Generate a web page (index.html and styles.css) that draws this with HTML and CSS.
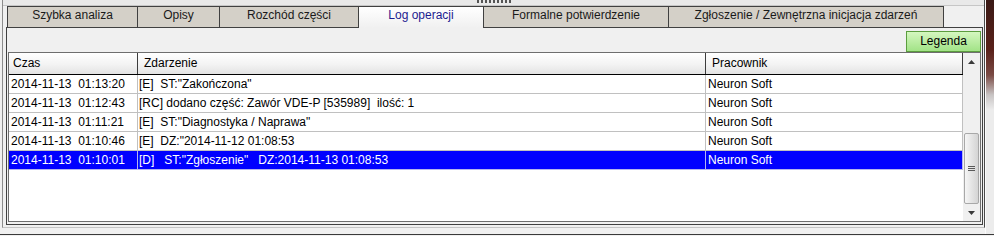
FILE: index.html
```html
<!DOCTYPE html>
<html lang="pl">
<head>
<meta charset="utf-8">
<title>Log operacji</title>
<link rel="stylesheet" href="styles.css">
</head>
<body>
<div class="screen">
  <div class="frame">
    <div class="splitter"><span class="grip"></span></div>
    <div class="tabs">
      <div class="tab t1">Szybka analiza</div>
      <div class="tab t2">Opisy</div>
      <div class="tab t3">Rozchód części</div>
      <div class="tab t4 active">Log operacji</div>
      <div class="tab t5">Formalne potwierdzenie</div>
      <div class="tab t6 last">Zgłoszenie / Zewnętrzna inicjacja zdarzeń</div>
    </div>
    <div class="panel">
      <div class="toolbar"><button class="legend" type="button">Legenda</button></div>
      <div class="grid">
        <div class="grid-main">
          <div class="row head">
            <div class="cell c1">Czas</div>
            <div class="cell c2">Zdarzenie</div>
            <div class="cell c3">Pracownik</div>
          </div>
          <div class="row">
            <div class="cell c1">2014-11-13  01:13:20</div>
            <div class="cell c2">[E]  ST:"Zakończona"</div>
            <div class="cell c3">Neuron Soft</div>
          </div>
          <div class="row">
            <div class="cell c1">2014-11-13  01:12:43</div>
            <div class="cell c2">[RC] dodano część: Zawór VDE-P [535989]  ilość: 1</div>
            <div class="cell c3">Neuron Soft</div>
          </div>
          <div class="row">
            <div class="cell c1">2014-11-13  01:11:21</div>
            <div class="cell c2">[E]  ST:"Diagnostyka / Naprawa"</div>
            <div class="cell c3">Neuron Soft</div>
          </div>
          <div class="row">
            <div class="cell c1">2014-11-13  01:10:46</div>
            <div class="cell c2">[E]  DZ:"2014-11-12 01:08:53</div>
            <div class="cell c3">Neuron Soft</div>
          </div>
          <div class="row sel">
            <div class="cell c1">2014-11-13  01:10:01</div>
            <div class="cell c2">[D]   ST:"Zgłoszenie"   DZ:2014-11-13 01:08:53</div>
            <div class="cell c3">Neuron Soft</div>
          </div>
        </div>
        <div class="scrollbar">
          <div class="sb-btn"><svg width="7" height="4" viewBox="0 0 7 4"><polygon points="3.5,0 7,4 0,4" fill="#3a3a3a"/></svg></div>
          <div class="sb-track"><div class="thumb"><i></i><i></i><i></i></div></div>
          <div class="sb-btn"><svg width="7" height="4" viewBox="0 0 7 4"><polygon points="0,0 7,0 3.5,4" fill="#3a3a3a"/></svg></div>
        </div>
      </div>
    </div>
  </div>
  <div class="edge"></div>
</div>
</body>
</html>
```
FILE: styles.css
```css
* { box-sizing: border-box; margin: 0; padding: 0; }
html, body { width: 994px; height: 236px; overflow: hidden; }
body {
  background: #f0f0f0;
  font-family: "Liberation Sans", Arial, sans-serif;
  font-size: 12px;
  color: #000;
}
.screen {
  display: flex;
  height: 235px;
  border-bottom: 1px solid #3a3a3a;
}
.frame {
  margin-left: 2px;
  width: 983px;
  height: 228px;
  border-left: 1px solid #8c8c8c;
  border-right: 1px solid #4a4a4a;
  border-bottom: 1px solid #c4c4c4;
  display: flex;
  flex-direction: column;
}
.splitter {
  height: 6px;
  background: #e9e9e9;
  border-bottom: 1px solid #c6c6c6;
  display: flex;
  justify-content: center;
}
.grip {
  width: 34px;
  height: 3px;
  background: repeating-linear-gradient(to right, #555 0 2px, transparent 2px 4px);
}
.tabs {
  display: flex;
  height: 21px;
  padding-left: 4px;
}
.tab {
  height: 21px;
  border-top: 1px solid #404040;
  border-left: 1px solid #404040;
  background: #d4d0c8;
  color: #1a1a1a;
  text-align: center;
  line-height: 16px;
  white-space: nowrap;
}
.tab.last { border-right: 1px solid #404040; }
.tab.active {
  position: relative;
  z-index: 1;
  height: 22px;
  background: linear-gradient(#ffffff, #f0f0f0);
  color: #1c1c90;
}
.t1 { width: 130px; }
.t2 { width: 82px; }
.t3 { width: 139px; }
.t4 { width: 125px; }
.t5 { width: 185px; }
.t6 { width: 276px; }
.panel {
  margin-left: 3px;
  width: 977px;
  height: 198px;
  border: 1px solid #404040;
  background: #f0f0f0;
  padding: 3px 1px 2px 1px;
  display: flex;
  flex-direction: column;
}
.toolbar {
  display: flex;
  justify-content: flex-end;
  height: 21px;
}
.legend {
  width: 75px;
  height: 21px;
  border: 1px solid #5b9d3e;
  background: linear-gradient(#d4f7bf, #a2e387);
  font: 12px/19px "Liberation Sans", Arial, sans-serif;
  color: #000;
}
.grid {
  height: 170px;
  border: 1px solid #6e6e6e;
  display: flex;
  background: #fff;
}
.grid-main { width: 954px; }
.row {
  display: flex;
  height: 19px;
  border-bottom: 1px solid #c0c0c0;
  line-height: 18px;
  white-space: pre;
}
.cell {
  border-right: 1px solid #c0c0c0;
  padding-left: 2px;
  overflow: hidden;
}
.c1 { width: 129px; }
.c2 { width: 568px; padding-left: 1px; }
.c3 { width: 257px; }
.head {
  height: 22px;
  border-bottom: 1px solid #000;
  background: linear-gradient(#ffffff, #f3f3f3 55%, #e3e3e3);
  line-height: 20px;
}
.head .cell { border-right-color: #3c3c3c; padding-left: 6px; }
.head .c1 { padding-left: 4px; }
.sel {
  background: #0000ff;
  color: #fff;
  border-bottom-color: #b4b4ee;
}
.sel .cell { border-right-color: #b4b4ee; }
.scrollbar {
  width: 17px;
  display: flex;
  flex-direction: column;
  background: #f0f0f0;
}
.sb-btn {
  height: 17px;
  display: flex;
  align-items: center;
  justify-content: center;
}
.sb-btn svg { display: block; }
.sb-track {
  flex: 1;
  display: flex;
  flex-direction: column;
  justify-content: flex-end;
}
.thumb {
  height: 71px;
  margin: 0 1px;
  border: 1px solid #a8a8a8;
  border-radius: 2px;
  background: linear-gradient(to right, #f6f6f6, #e6e6e6 45%, #d4d4d4);
  display: flex;
  flex-direction: column;
  align-items: center;
  justify-content: center;
  gap: 1px;
}
.thumb i {
  display: block;
  width: 7px;
  height: 1px;
  background: #5a5a5a;
}
.edge {
  width: 9px;
  border-left: 1px solid #fbfbfb;
  background: linear-gradient(to bottom, #3a1a16 0, #5a211a 50px, #7a4a44 75px, #c8c4c4 95px, #ececec 110px, #ececec 100%);
}
```
